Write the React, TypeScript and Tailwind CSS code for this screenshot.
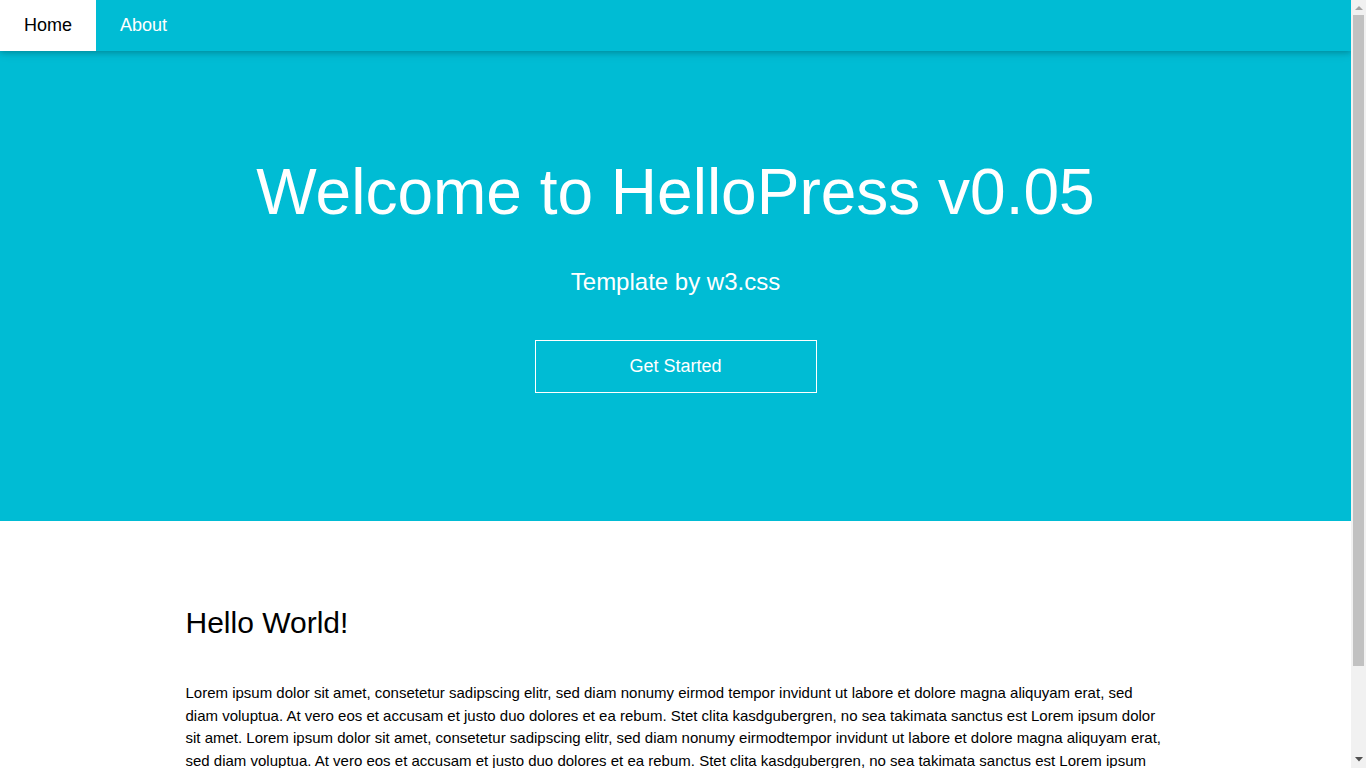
import React from "react";

const lorem =
  "Lorem ipsum dolor sit amet, consetetur sadipscing elitr, sed diam nonumy eirmod tempor invidunt ut labore et dolore magna aliquyam erat, sed diam voluptua. At vero eos et accusam et justo duo dolores et ea rebum. Stet clita kasdgubergren, no sea takimata sanctus est Lorem ipsum dolor sit amet. Lorem ipsum dolor sit amet, consetetur sadipscing elitr, sed diam nonumy eirmodtempor invidunt ut labore et dolore magna aliquyam erat, sed diam voluptua. At vero eos et accusam et justo duo dolores et ea rebum. Stet clita kasdgubergren, no sea takimata sanctus est Lorem ipsum dolor sit amet.";

// the page scrollbar shown in the screenshot
const ScrollBar: React.FC = () => (
  <div className="fixed top-0 right-0 z-20 flex h-screen w-[15px] flex-col items-center bg-[#f1f1f1]">
    <svg width="8" height="15" viewBox="0 0 8 15" className="shrink-0">
      <path d="M0 10 L4 6 L8 10 Z" fill="#a3a3a3" />
    </svg>
    <div className="h-[651px] w-[11px] shrink-0 bg-[#c1c1c1]" />
    <div className="flex-1" />
    <svg width="8" height="15" viewBox="0 0 8 15" className="shrink-0">
      <path d="M0 4 L8 4 L4 8.5 Z" fill="#505050" />
    </svg>
  </div>
);

const App: React.FC = () => {
  return (
    <div className="min-h-screen bg-white pr-[15px] font-['Liberation_Sans',Arial,sans-serif] text-[15px] leading-[1.5] text-black">
      {/* top bar */}
      <nav className="relative z-10 flex h-[51px] bg-[#00bcd4] shadow-[0_2px_5px_0_rgba(0,0,0,0.16),0_2px_10px_0_rgba(0,0,0,0.12)]">
        <a href="#" className="flex h-full items-center bg-white px-6 text-[18px] leading-[27px] text-black">
          Home
        </a>
        <a href="#" className="flex h-full items-center px-6 text-[18px] leading-[27px] text-white">
          About
        </a>
      </nav>

      {/* header */}
      <header className="flex flex-col items-center bg-[#00bcd4] px-4 pt-[77px] pb-[128px] text-center text-white">
        <h1 className="mt-4 text-[64px] leading-[96px] font-normal">Welcome to HelloPress v0.05</h1>
        <p className="mt-6 text-[24px] leading-[36px]">Template by w3.css</p>
        <button className="mt-10 h-[53px] w-[282px] border border-white text-[18px] leading-[27px] text-white">
          Get Started
        </button>
      </header>

      {/* content */}
      <section className="mx-auto max-w-[980px] pt-[79px] pb-[76px]">
        <h2 className="text-[30px] leading-[45px] font-normal">Hello World!</h2>
        <p className="mt-[37px] leading-[22.5px]">{lorem}</p>
      </section>

      <ScrollBar />
    </div>
  );
};

export default App;
